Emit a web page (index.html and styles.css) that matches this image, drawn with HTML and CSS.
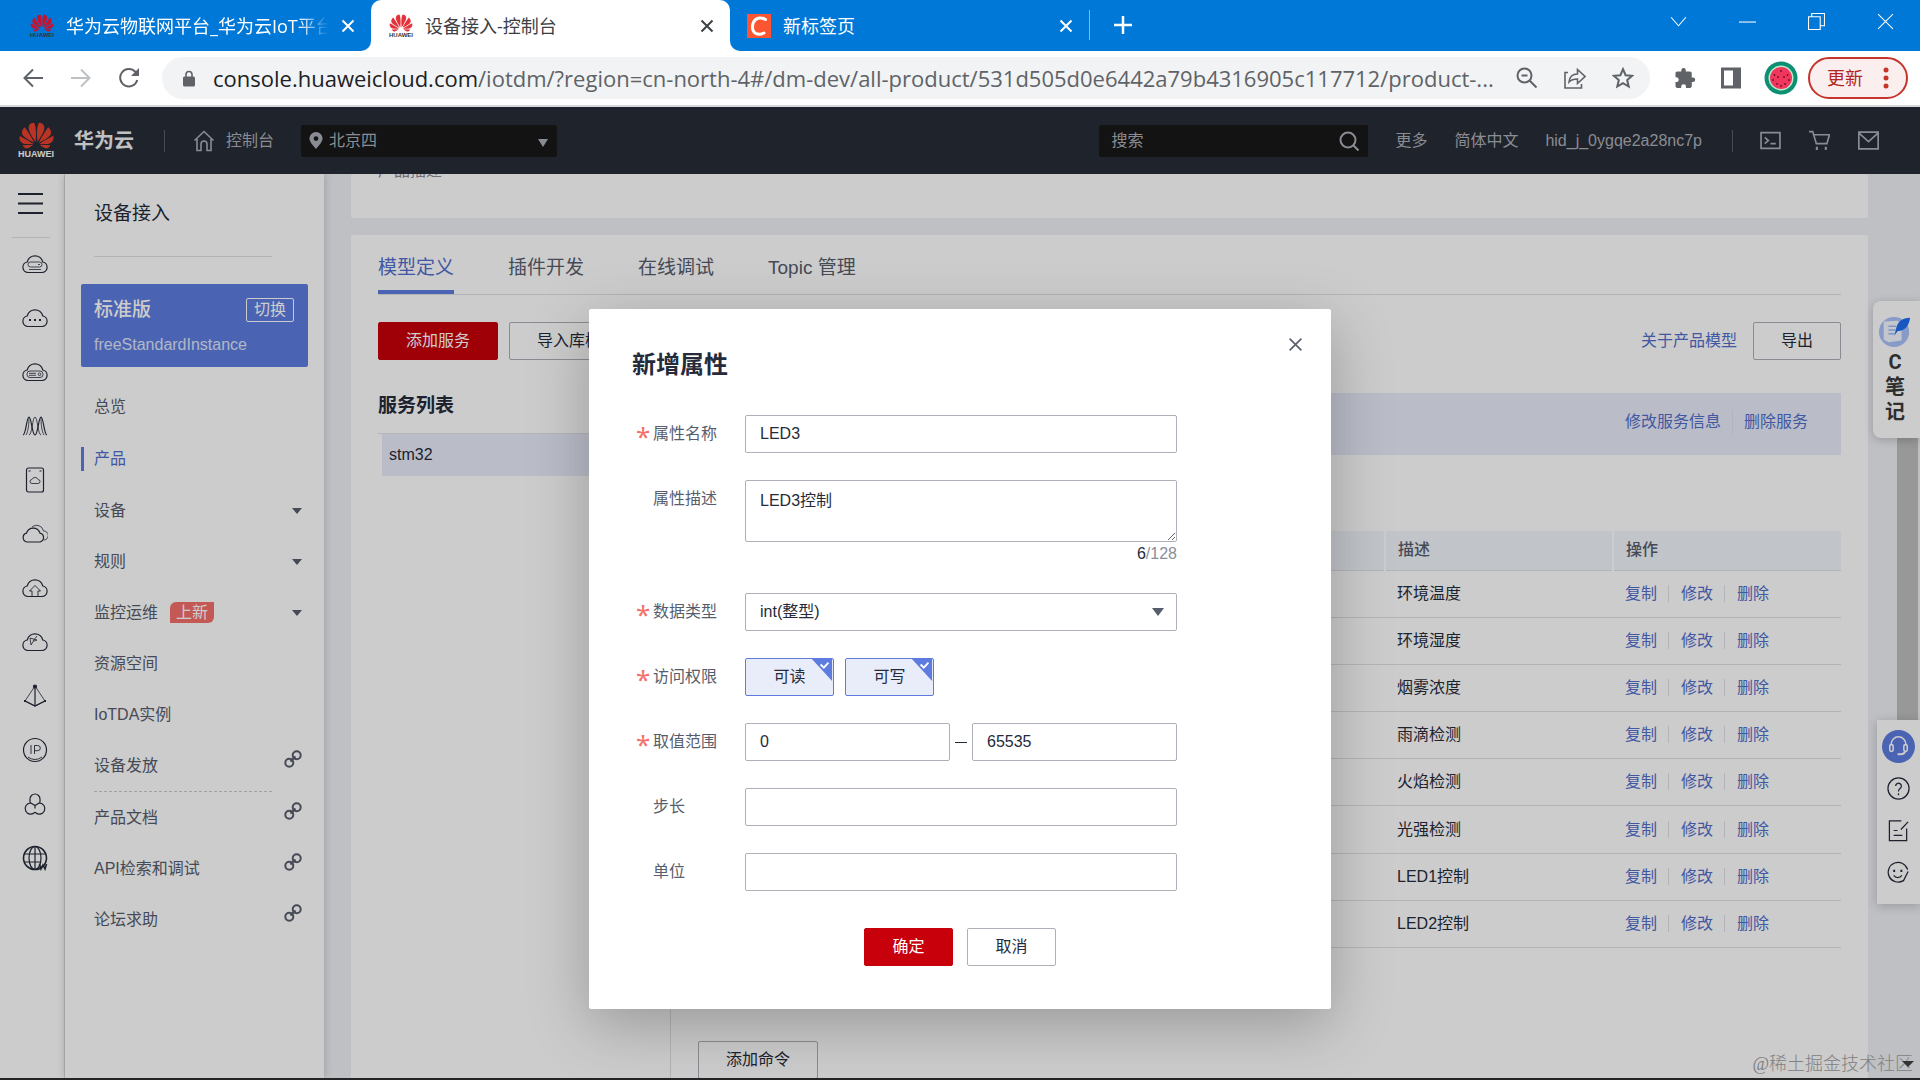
FILE: index.html
```html
<!DOCTYPE html>
<html lang="zh-CN">
<head>
    <meta charset="UTF-8">
    <meta name="viewport" content="width=device-width, initial-scale=1.0">
    <title>设备接入-控制台</title>
    <link rel="stylesheet" href="styles.css">
</head>
<body>
    <svg width="0" height="0" class="sprite" aria-hidden="true">
        <symbol id="petals" viewBox="0 2.5 24 19">
            <path d="M3.67 6.14S1.82 7.91 1.72 9.78v.35c.08 1.51 1.22 2.4 1.22 2.4 1.83 1.79 6.26 4.04 7.3 4.55 0 0 .06.03.1-.01l.02-.04v-.04C7.52 10.8 3.67 6.14 3.67 6.14zM9.65 18.6c-.02-.08-.1-.08-.1-.08l-7.38.26c.8 1.43 2.15 2.53 3.56 2.2.96-.25 3.16-1.78 3.88-2.3.06-.05.04-.09.04-.09zm.08-.78C6.49 15.63.21 12.28.21 12.28c-.15.46-.2.9-.21 1.3v.07c0 1.07.4 1.82.4 1.82.8 1.69 2.34 2.2 2.34 2.2.7.3 1.4.31 1.4.31.12.02 4.4 0 5.54 0 .05 0 .08-.05.08-.05v-.06c0-.03-.03-.05-.03-.05zM9.06 3.19a3.42 3.42 0 00-2.57 3.15v.41c.03.6.16 1.05.16 1.05.66 2.9 3.86 7.65 4.55 8.65.05.05.1.03.1.03a.1.1 0 00.06-.1c1.06-10.6-1.11-13.42-1.11-13.42-.32.02-1.19.23-1.19.23zm8.3 2.27s-.49-1.8-2.44-2.28c0 0-.57-.14-1.17-.22 0 0-2.18 2.81-1.12 13.43.01.07.06.08.06.08.07.03.1-.03.1-.03.72-1.03 3.9-5.76 4.55-8.64 0 0 .36-1.4.02-2.34zm-2.92 13.07s-.07 0-.09.05c0 0-.01.07.03.1.7.51 2.85 2 3.88 2.3 0 0 .16.05.43.06h.14c.69-.02 1.9-.37 3-2.26l-7.4-.25zm7.83-8.41c.14-2.06-1.94-3.97-1.94-3.98 0 0-3.85 4.66-6.67 10.8 0 0-.03.08.02.13l.04.01h.06c1.06-.53 5.46-2.77 7.28-4.54 0 0 1.15-.93 1.21-2.42zm1.52 2.14s-6.28 3.37-9.52 5.55c0 0-.05.04-.03.11 0 0 .03.06.07.06 1.16 0 5.56 0 5.67-.02 0 0 .57-.02 1.27-.29 0 0 1.56-.5 2.37-2.27 0 0 .73-1.45.17-3.14z"/>
        </symbol>
        <symbol id="cross" viewBox="0 0 14 14">
            <path d="M1.5 1.5l11 11M12.5 1.5l-11 11" fill="none" stroke="currentColor"/>
        </symbol>
        <symbol id="cloud" viewBox="0 0 26 20">
            <path d="M7 18.5H6A5.3 5.3 0 0 1 5.2 8a8 8 0 0 1 15.6 0A5.3 5.3 0 0 1 20 18.5z" fill="none" stroke="currentColor" stroke-width="1.2"/>
        </symbol>
        <symbol id="chain" viewBox="0 0 18 18">
            <g fill="none" stroke="currentColor" stroke-width="2">
                <circle cx="12.7" cy="5.300" r="4"/>
                <circle cx="5.300" cy="12.700" r="4"/>
                <path d="M6.500 11.500l5-5"/>
            </g>
        </symbol>
    </svg>

    <!-- browser chrome -->
    <div class="tab-bar">
        <div class="tab">
            <div class="favicon huawei dark"><svg><use href="#petals"/></svg><span>HUAWEI</span></div>
            <span class="tab-title fade">华为云物联网平台_华为云IoT平台</span>
            <button class="tab-close" aria-label="关闭"><svg><use href="#cross"/></svg></button>
        </div>
        <div class="tab active">
            <div class="favicon huawei"><svg><use href="#petals"/></svg><span>HUAWEI</span></div>
            <span class="tab-title">设备接入-控制台</span>
            <button class="tab-close" aria-label="关闭"><svg><use href="#cross"/></svg></button>
        </div>
        <div class="tab last">
            <div class="favicon"><svg viewBox="0 0 24 24"><rect width="24" height="24" fill="#fc5531"/><path d="M18.500 5.500C11 1.500 5.500 6 5.500 13c0 7 6 8.500 11.500 6" fill="none" stroke="#fff" stroke-width="3" stroke-linecap="round"/></svg></div>
            <span class="tab-title">新标签页</span>
            <button class="tab-close" aria-label="关闭"><svg><use href="#cross"/></svg></button>
        </div>
        <button class="new-tab" aria-label="新标签页"><svg viewBox="0 0 18 18"><path d="M9 0v18M0 9h18" stroke="#fff" stroke-width="2.500"/></svg></button>
        <div class="window-controls">
            <button aria-label="标签页列表"><svg viewBox="0 0 16 16"><path d="M1 4l7 8 7-8"/></svg></button>
            <button aria-label="最小化"><svg viewBox="0 0 16 16"><path d="M0 8.500h16"/></svg></button>
            <button aria-label="还原"><svg viewBox="0 0 16 16"><path d="M.5 3.500h11v12H.500zM3.500 3V.500h12v11.500H12"/></svg></button>
            <button aria-label="关闭窗口"><svg viewBox="0 0 16 16"><path d="M1 1l14 14M15 1L1 15"/></svg></button>
        </div>
    </div>
    <div class="toolbar">
        <div class="nav-buttons">
            <button aria-label="后退"><svg viewBox="0 0 20 20"><path d="M20 10H1.500M10 1.500L1.500 10l8.500 8.500"/></svg></button>
            <button aria-label="前进" class="muted"><svg viewBox="0 0 20 20"><path d="M0 10h18.500M10 1.500l8.500 8.500-8.500 8.500"/></svg></button>
            <button aria-label="重新加载"><svg viewBox="0 0 20 20"><path d="M18.300 12a8.700 8.700 0 1 1-2-8.200l2 2.400"/><path d="M20 0v8h-8z" fill="#5f6368" stroke="none"/></svg></button>
        </div>
        <div class="address">
            <svg class="lock" viewBox="0 0 12 16"><rect y="6" width="12" height="10" rx="1.500" fill="#5f6368"/><path d="M3 7V4a3 3 0 0 1 6 0v3" fill="none" stroke="#5f6368" stroke-width="1.600"/></svg>
            <span class="url"><b>console.huaweicloud.com</b>/iotdm/?region=cn-north-4#/dm-dev/all-product/531d505d0e6442a79b4316905c117712/product-...</span>
            <svg viewBox="0 0 22 22"><circle cx="8.500" cy="8.500" r="7"/><path d="M5.500 8.500h6M13.500 13.500l7 7"/></svg>
            <svg viewBox="0 0 22 22"><path d="M4 5.500H1v15.500h16.500v-4" stroke-width="1.600"/><path d="M5 15c.5-5 3.500-8 8.500-8V2.500l7.500 7-7.500 7V12c-4 0-6.500 1-8.500 3z" stroke-width="1.600"/></svg>
            <svg viewBox="0 0 22 22"><path d="M11 2.200l2.600 6 6.500.6-4.900 4.300 1.500 6.400-5.700-3.400-5.700 3.400 1.500-6.400-4.900-4.300 6.500-.6z"/></svg>
        </div>
        <svg class="ext" viewBox="0 0 22 22"><path d="M19 10.500h-1.300V6.300c0-1-.8-1.800-1.800-1.800h-4.100V3.200a2.200 2.200 0 0 0-4.500 0v1.300H3.200c-1 0-1.700.8-1.700 1.800v3.900h1.200a2.500 2.500 0 0 1 0 4.900H1.500v4c0 1 .8 1.900 1.800 1.900h3.900v-1.300a2.400 2.400 0 0 1 4.800 0V21h4c1 0 1.800-.9 1.800-1.900v-4.200H19a2.200 2.200 0 0 0 0-4.400z" fill="#5f6368"/></svg>
        <svg class="ext" viewBox="0 0 22 22"><path d="M2.500 2h17v18h-17z" fill="none" stroke="#5f6368" stroke-width="3"/><path d="M13 2h7v18h-7z" fill="#5f6368"/></svg>
        <svg class="avatar" viewBox="0 0 34 34"><circle cx="17" cy="17" r="16.500" fill="#0c9073"/><circle cx="17" cy="17" r="12.500" fill="#bfe8c8"/><circle cx="17" cy="17" r="11" fill="#f0365c"/><path d="M17 9v2M10.500 13v2M23.500 13v2M9 18v2M25 18v2M14 15v2M20 15v2M13 22v2M21 22v2M17 24v2" stroke="#5c1025" stroke-width="1.200"/></svg>
        <button class="update">更新<svg viewBox="0 0 6 22"><circle cx="3" cy="3" r="2.500"/><circle cx="3" cy="11" r="2.500"/><circle cx="3" cy="19" r="2.500"/></svg></button>
    </div>

    <div class="page">
        <header class="header">
            <div class="brand huawei"><svg><use href="#petals"/></svg><span>HUAWEI</span></div>
            <strong>华为云</strong>
            <i class="split"></i>
            <a href="#" class="home"><svg viewBox="0 0 22 22"><path d="M1.500 10.500L11 1.500l9.500 9M4 9v11.500h4V14a3 3 0 0 1 6 0v6.500h4V9"/></svg>控制台</a>
            <div class="region">
                <svg viewBox="0 0 14 18"><path d="M7 0a7 7 0 0 0-7 7c0 4 7 11 7 11s7-7 7-11a7 7 0 0 0-7-7zm0 4.500a2.500 2.500 0 1 1 0 5 2.500 2.500 0 0 1 0-5z" fill="#adb0b8"/></svg>
                <select aria-label="区域"><option>北京四</option></select>
            </div>
            <div class="search">
                <input type="text" placeholder="搜索" aria-label="搜索">
                <svg viewBox="0 0 20 20"><circle cx="9" cy="9" r="7.500"/><path d="M14 14l5.500 5.500"/></svg>
            </div>
            <a href="#">更多</a>
            <a href="#">简体中文</a>
            <a href="#">hid_j_0ygqe2a28nc7p</a>
            <i class="split"></i>
            <div class="header-icons">
                <svg viewBox="0 0 20 20"><path d="M1 2.500h18v15H1zM4.500 7l3.500 3-3.500 3M10 13h5"/></svg>
                <svg viewBox="0 0 20 20"><path d="M0 1.500h3.500L7 13h10l2.500-8.500H5"/><path d="M6.500 17.500h2M15 17.500h2" stroke-width="3"/></svg>
                <svg viewBox="0 0 20 20"><path d="M0.800 2h18.400v16H.800zM1 3l9 8 9-8"/></svg>
            </div>
        </header>

        <div class="content">
            <nav class="rail">
                <button aria-label="服务列表"><svg viewBox="0 0 25 21"><path d="M0 1h25M0 10.500h25M0 20h25" stroke-width="2.200"/></svg></button>
                <svg viewBox="0 0 26 26"><use href="#cloud" y="3" width="26" height="20"/><rect x="6" y="11" width="14" height="5" rx="2.500" stroke-width=".8"/><path d="M16 13.500h2M7 18.500h12" stroke-width=".8"/></svg>
                <svg viewBox="0 0 26 26"><use href="#cloud" y="3" width="26" height="20"/><path d="M7 15h2M12 15h2M17 15h2" stroke-width="2"/></svg>
                <svg viewBox="0 0 26 26"><use href="#cloud" y="3" width="26" height="20"/><rect x="5" y="12" width="16" height="6.500" rx="3" stroke-width=".8"/><path d="M7 14.300h7M7 16.300h7" stroke-width=".8"/><circle cx="17.500" cy="15.300" r="1.300" stroke-width=".8"/></svg>
                <svg viewBox="0 0 26 26"><path d="M1 22c3 0 3.500-18 6-18s3 18 6 18 3.500-18 6-18 3 18 6 18"/><path d="M7 22c3 0 3.500-18 6-18s3 18 6 18M4 22C6.500 18 7 10 7 4M22 22c-2.500-4-3-12-3-18" stroke-width=".8"/></svg>
                <svg viewBox="0 0 26 26"><rect x="4.500" y="1" width="17" height="24" rx="2"/><path d="M6.500 4h2M17.500 4h2"/><path d="M10 16.500a2 2 0 0 1 0-4 3.200 3.200 0 0 1 6 0 2 2 0 0 1 0 4z" stroke-width=".8"/></svg>
                <svg viewBox="0 0 26 26"><path d="M6 21H5a4.500 4.500 0 0 1-.5-8.800 7 7 0 0 1 13.500 0A4.500 4.500 0 0 1 18 21z"/><path d="M10 6a7 7 0 0 1 11.500 4A4.500 4.500 0 0 1 22 19" stroke-width=".8"/></svg>
                <svg viewBox="0 0 26 26"><use href="#cloud" y="3" width="26" height="20"/><path d="M10 21v-5H7.500L13 10.500l5.500 5.500H16v5" stroke-width=".9"/></svg>
                <svg viewBox="0 0 26 26"><use href="#cloud" y="3" width="26" height="20"/><path d="M8 9l7 2-4 1.500L9 16zM15 7l-4 5" stroke-width=".8"/></svg>
                <svg viewBox="0 0 26 26"><path d="M13 3v20" /><path d="M13 3L3 18l10 5 10-5z" stroke-width=".8"/><path d="M3 18l10 5 10-5"/><circle cx="13" cy="3.500" r="1.500" fill="#252b3a"/><path d="M2 18h2M22 18h2" stroke-width="2"/></svg>
                <svg viewBox="0 0 26 26"><circle cx="13" cy="13" r="11.500"/><path d="M9 8v9M12.500 17V8.500h3.200a2.600 2.600 0 0 1 0 5.200h-3.200M6 20a11 11 0 0 0 14 0" stroke-width=".9"/></svg>
                <svg viewBox="0 0 26 26"><path d="M8 11.500V8a5 5 0 0 1 10 0v3.500M13 17.500V14.500M8 11.500l5 3 5-3M8.500 12A5.600 5.600 0 1 0 13 21.200M17.500 12A5.600 5.600 0 1 1 13 21.200"/></svg>
                <svg viewBox="0 0 26 26"><circle cx="13" cy="13" r="11.500" stroke-width="1.600"/><ellipse cx="13" cy="13" rx="6" ry="11.500"/><path d="M13 1.500v23M2 9h22M2 17h16"/><path d="M17.500 19l1.500 5 2-4 2 4 1.500-5" stroke-width="1.600"/></svg>
            </nav>

            <aside class="sidebar">
                <h2>设备接入</h2>
                <div class="instance">
                    <div><b>标准版</b><button>切换</button></div>
                    <p>freeStandardInstance</p>
                </div>
                <ul>
                    <li><a href="#">总览</a></li>
                    <li class="current"><a href="#">产品</a></li>
                    <li><a href="#">设备</a><i class="caret"></i></li>
                    <li><a href="#">规则</a><i class="caret"></i></li>
                    <li><a href="#">监控运维</a><em>上新</em><i class="caret"></i></li>
                    <li><a href="#">资源空间</a></li>
                    <li><a href="#">IoTDA实例</a></li>
                    <li class="out"><a href="#">设备发放</a><svg><use href="#chain"/></svg></li>
                </ul>
                <ul class="docs">
                    <li class="out"><a href="#">产品文档</a><svg><use href="#chain"/></svg></li>
                    <li class="out"><a href="#">API检索和调试</a><svg><use href="#chain"/></svg></li>
                    <li class="out"><a href="#">论坛求助</a><svg><use href="#chain"/></svg></li>
                </ul>
            </aside>

            <main class="main">
                <section class="card summary"><p>产品描述</p></section>
                <section class="card detail">
                    <nav class="tabs">
                        <a href="#" class="selected">模型定义</a>
                        <a href="#">插件开发</a>
                        <a href="#">在线调试</a>
                        <a href="#">Topic 管理</a>
                    </nav>
                    <div class="actions">
                        <button class="btn primary">添加服务</button>
                        <button class="btn">导入库模型</button>
                        <a href="#">关于产品模型</a>
                        <button class="btn">导出</button>
                    </div>
                    <div class="model">
                        <div class="services">
                            <h3>服务列表</h3>
                            <div class="service">stm32</div>
                        </div>
                        <div class="service-detail">
                            <div class="service-bar">
                                <a href="#">修改服务信息</a>
                                <a href="#">删除服务</a>
                            </div>
                            <table>
                                <thead>
                                    <tr><th></th><th>描述</th><th>操作</th></tr>
                                </thead>
                                <tbody>
                                    <tr><td></td><td>环境温度</td><td><a href="#">复制</a><a href="#">修改</a><a href="#">删除</a></td></tr>
                                    <tr><td></td><td>环境湿度</td><td><a href="#">复制</a><a href="#">修改</a><a href="#">删除</a></td></tr>
                                    <tr><td></td><td>烟雾浓度</td><td><a href="#">复制</a><a href="#">修改</a><a href="#">删除</a></td></tr>
                                    <tr><td></td><td>雨滴检测</td><td><a href="#">复制</a><a href="#">修改</a><a href="#">删除</a></td></tr>
                                    <tr><td></td><td>火焰检测</td><td><a href="#">复制</a><a href="#">修改</a><a href="#">删除</a></td></tr>
                                    <tr><td></td><td>光强检测</td><td><a href="#">复制</a><a href="#">修改</a><a href="#">删除</a></td></tr>
                                    <tr><td></td><td>LED1控制</td><td><a href="#">复制</a><a href="#">修改</a><a href="#">删除</a></td></tr>
                                    <tr><td></td><td>LED2控制</td><td><a href="#">复制</a><a href="#">修改</a><a href="#">删除</a></td></tr>
                                </tbody>
                            </table>
                            <button class="btn">添加命令</button>
                        </div>
                    </div>
                </section>
            </main>
        </div>

        <div class="scrollbar"></div>
        <div class="notes">
            <svg viewBox="0 0 34 34"><circle cx="16" cy="18" r="16" fill="#a9c1fb"/><path d="M5 7l15-1 4 4v17l-14 2-5-3z" fill="#f4f8ff"/><path d="M10 12h8M10 16h8M10 20h6" stroke="#9db8f5" stroke-width="1.500"/><path d="M33 3c-8 0-14 4-15 13l-2 6 4-5c8 0 12-6 13-14z" fill="#1c6df2"/></svg>
            <span>C</span><span>笔</span><span>记</span>
        </div>
        <div class="helpers">
            <svg class="service-icon" viewBox="0 0 34 34"><circle cx="17" cy="17" r="17" fill="#5e7ce0"/><g fill="none" stroke="#fff" stroke-width="1.600"><path d="M9.500 16v-1.500a7.500 7.500 0 0 1 15 0V16"/><rect x="8" y="15" width="3.500" height="7" rx="1.700"/><rect x="22.500" y="15" width="3.500" height="7" rx="1.700"/><path d="M24 22c-1 2.500-3 3-5 3h-3" stroke-width="2"/></g></svg>
            <svg viewBox="0 0 24 24"><circle cx="12" cy="12" r="11"/><path d="M9 9.500a3 3 0 1 1 4.500 2.600c-1 .7-1.500 1.200-1.500 2.900M12 17v2"/></svg>
            <svg viewBox="0 0 24 24"><path d="M15 2H2.500v20.500h18V10M22 3l-7.500 8M7 12h4M7 17h9"/></svg>
            <svg viewBox="0 0 24 24"><path d="M17 20.500A10.300 10.300 0 1 1 21.500 9M22 11l-5 10M7 15c2 3 6.500 3 8.500 0"/><path d="M7.500 9v2.500M15 9v2.500" stroke-width="2"/></svg>
        </div>

        <div class="overlay">
            <form class="modal">
                <button type="button" class="modal-close" aria-label="关闭"><svg><use href="#cross"/></svg></button>
                <h1>新增属性</h1>
                <div class="field required">
                    <label for="name">属性名称</label>
                    <input type="text" id="name" value="LED3">
                </div>
                <div class="field">
                    <label for="desc">属性描述</label>
                    <div class="area">
                        <textarea id="desc">LED3控制</textarea>
                        <p><span>6</span>/128</p>
                    </div>
                </div>
                <div class="field required">
                    <label for="type">数据类型</label>
                    <div class="select">
                        <select id="type"><option>int(整型)</option></select>
                    </div>
                </div>
                <div class="field required">
                    <span class="label">访问权限</span>
                    <div class="checks">
                        <label><input type="checkbox" checked>可读<svg viewBox="0 0 22 24"><path d="M0 0h22v24z" fill="#5e7ce0"/><path d="M9.500 6l3.500 3.500L18 4" fill="none" stroke="#fff" stroke-width="2"/></svg></label>
                        <label><input type="checkbox" checked>可写<svg viewBox="0 0 22 24"><path d="M0 0h22v24z" fill="#5e7ce0"/><path d="M9.500 6l3.500 3.500L18 4" fill="none" stroke="#fff" stroke-width="2"/></svg></label>
                    </div>
                </div>
                <div class="field required">
                    <label for="min">取值范围</label>
                    <div class="range">
                        <input type="text" id="min" value="0">
                        <i></i>
                        <input type="text" value="65535" aria-label="最大值">
                    </div>
                </div>
                <div class="field">
                    <label for="step">步长</label>
                    <input type="text" id="step">
                </div>
                <div class="field">
                    <label for="unit">单位</label>
                    <input type="text" id="unit">
                </div>
                <div class="modal-actions">
                    <button type="button" class="btn primary">确定</button>
                    <button type="button" class="btn">取消</button>
                </div>
            </form>
        </div>
        <div class="watermark">@稀土掘金技术社区<i class="caret"></i></div>
    </div>
    <div class="taskbar"></div>
</body>
</html>
```
FILE: styles.css
```css
* {
    box-sizing: border-box;
}

body {
    margin: 0;
    height: 100vh;
    display: flex;
    flex-direction: column;
    overflow: hidden;
    font-family: "Liberation Sans", "Noto Sans CJK SC", sans-serif;
    font-size: 16px;
    line-height: 24px;
    color: #252b3a;
}

h1, h2, h3, p, ul {
    margin: 0;
    padding: 0;
}

ul {
    list-style: none;
}

a {
    color: #526ecc;
    text-decoration: none;
}

button, input, select, textarea {
    font: inherit;
    color: inherit;
}

button {
    border: none;
    background: none;
    padding: 0;
    cursor: pointer;
}

svg {
    flex: none;
}

.sprite {
    position: absolute;
}

/* tabs */
.tab-bar {
    height: 51px;
    flex: none;
    display: flex;
    background: #0078d7;
    color: #fff;
    font-family: "Open Sans", "Noto Sans CJK SC", sans-serif;
    font-size: 18px;
}

.tab {
    width: 359px;
    display: flex;
    align-items: center;
    gap: 12px;
    padding: 0 16px 0 18px;
}

.tab:first-child, .tab.last {
    position: relative;
    z-index: 1;
    background: #0078d7;
}

.tab:first-child {
    width: 371px;
    padding-left: 30px;
    border-radius: 0 0 10px 0;
}

.tab.last {
    padding-left: 17px;
    border-radius: 0 0 0 10px;
}

.tab.active {
    background: #fff;
    color: #3c4043;
    border-radius: 10px 10px 0 0;
    box-shadow: 0 20px 0 10px #fff;
    clip-path: inset(0 -10px 0 -10px);
}

.favicon {
    width: 24px;
    height: 24px;
    flex: none;
}

.favicon svg {
    display: block;
    width: 24px;
    height: 24px;
}

.huawei {
    display: flex;
    flex-direction: column;
    align-items: center;
}

.huawei svg {
    fill: #e2323b;
}

.favicon.huawei svg {
    height: 18px;
}

.favicon.huawei span {
    font: bold 6px/6px "Liberation Sans", sans-serif;
    color: #333;
}

.favicon.dark svg {
    fill: #c4122f;
}

.tab-title {
    flex: 1;
    line-height: 28px;
    white-space: nowrap;
    overflow: hidden;
}

.fade {
    -webkit-mask-image: linear-gradient(90deg, #000 88%, transparent);
    mask-image: linear-gradient(90deg, #000 88%, transparent);
}

.tab-close {
    width: 14px;
    height: 14px;
}

.tab-close svg {
    display: block;
    width: 14px;
    height: 14px;
    stroke-width: 2;
}

.new-tab {
    height: 30px;
    margin: 10px 0;
    padding: 0 24px;
    border-left: 1px solid #7fbbeb;
}

.new-tab svg {
    display: block;
    width: 18px;
    height: 18px;
}

.window-controls {
    margin-left: auto;
    padding: 13px 26px 0 0;
    display: flex;
    align-items: flex-start;
    gap: 52px;
}

.window-controls svg {
    display: block;
    width: 17px;
    height: 17px;
    fill: none;
    stroke: #fff;
}

/* address bar */
.toolbar {
    height: 56px;
    flex: none;
    display: flex;
    align-items: center;
    padding: 0 12px 0 23px;
    border-bottom: 2px solid #d5d7da;
    background: #fff;
    font-family: "Open Sans", "Noto Sans CJK SC", sans-serif;
}

.nav-buttons {
    display: flex;
    gap: 28px;
    width: 139px;
}

.nav-buttons svg {
    display: block;
    width: 20px;
    height: 20px;
    fill: none;
    stroke: #5f6368;
    stroke-width: 2;
}

.nav-buttons .muted svg {
    stroke: #bdc1c6;
}

.address {
    flex: 1;
    min-width: 0;
    height: 42px;
    display: flex;
    align-items: center;
    gap: 26px;
    padding: 0 16px 0 21px;
    border-radius: 21px;
    background: #f1f3f4;
}

.address svg {
    width: 22px;
    height: 22px;
    fill: none;
    stroke: #5f6368;
    stroke-width: 2;
}

.address .lock {
    width: 12px;
    height: 17px;
    stroke: none;
}

.url {
    flex: 1;
    margin: 0 -8px;
    font-size: 22px;
    line-height: 32px;
    white-space: nowrap;
    overflow: hidden;
    color: #5f6368;
}

.url b {
    font-weight: 400;
    color: #202124;
}

.ext {
    width: 22px;
    height: 22px;
    margin-left: 24px;
}

.avatar {
    width: 34px;
    height: 34px;
    margin: 0 10px 0 22px;
}

.update {
    display: flex;
    align-items: center;
    justify-content: space-between;
    width: 100px;
    height: 42px;
    padding: 0 17px;
    border: 2px solid #c5352c;
    border-radius: 21px;
    background: #fbeeee;
    color: #b3261e;
    font-size: 18px;
}

.update svg {
    width: 6px;
    height: 22px;
    fill: #c5352c;
}

/* console */
.page {
    position: relative;
    flex: 1;
    min-height: 0;
    display: flex;
    flex-direction: column;
}

.header {
    height: 67px;
    flex: none;
    display: flex;
    align-items: center;
    padding: 0 41px 0 18px;
    background: #272c36;
    color: #adb0b8;
}

.header svg {
    fill: none;
    stroke: #adb0b8;
    stroke-width: 1.6;
}

.header a {
    color: #adb0b8;
    margin-left: 27px;
}

.brand {
    width: 36px;
}

.header .brand svg {
    width: 35px;
    height: 27px;
    fill: #e8412f;
    stroke: none;
}

.brand span {
    font-size: 9px;
    line-height: 11px;
    font-weight: bold;
    color: #fff;
}

.header strong {
    margin-left: 20px;
    font-size: 20px;
    color: #f0f0f2;
}

.split {
    width: 1px;
    height: 22px;
    margin-left: 30px;
    background: #575d6c;
}

.header .home {
    display: flex;
    align-items: center;
    gap: 11px;
    margin-left: 28px;
}

.home svg {
    width: 22px;
    height: 22px;
}

.region {
    position: relative;
    width: 256px;
    height: 32px;
    margin-left: 27px;
    border-radius: 2px;
    background: #181818;
}

.region svg {
    position: absolute;
    left: 8px;
    top: 7px;
    width: 14px;
    height: 17px;
    stroke: none;
}

.region select {
    width: 100%;
    height: 32px;
    padding: 0 28px;
    border: none;
    background: none;
    appearance: none;
}

.region::after, .select::after {
    content: "";
    position: absolute;
    right: 9px;
    top: 14px;
    border: 5px solid transparent;
    border-top: 8px solid #adb0b8;
    border-bottom: none;
}

.search {
    display: flex;
    align-items: center;
    width: 269px;
    height: 32px;
    margin-left: auto;
    padding-right: 9px;
    border-radius: 2px;
    background: #181818;
}

.search input {
    flex: 1;
    min-width: 0;
    padding: 0 12px;
    border: none;
    background: none;
}

.search input::placeholder {
    color: #adb0b8;
}

.search svg {
    width: 20px;
    height: 20px;
    stroke-width: 2;
}

.header-icons {
    display: flex;
    gap: 28px;
    margin-left: 27px;
}

.header-icons svg {
    width: 21px;
    height: 21px;
}

.content {
    flex: 1;
    min-height: 0;
    display: flex;
    background: #eef0f5;
    overflow: hidden;
}

.rail {
    width: 65px;
    flex: none;
    display: flex;
    flex-direction: column;
    align-items: center;
    gap: 28px;
    padding-left: 6px;
    border-right: 1px solid #dfe1e6;
    background: #fff;
}

.rail button {
    width: 38px;
    height: 64px;
    margin: 0 8px -15px 0;
    padding: 19px 6px 23px;
    border-bottom: 1px solid #dfe1e6;
}

.rail svg {
    display: block;
    width: 26px;
    height: 26px;
    fill: none;
    stroke: #252b3a;
    color: #252b3a;
    stroke-width: 1.2;
}

.rail button svg {
    width: 25px;
    height: 21px;
}

.sidebar {
    z-index: 1;
    width: 259px;
    flex: none;
    padding: 0 16px;
    background: #fff;
    box-shadow: 0 0 8px rgba(0, 0, 0, 0.2);
}

.sidebar h2 {
    width: 178px;
    height: 83px;
    margin: 0 0 27px 13px;
    padding-top: 28px;
    border-bottom: 1px solid #dfe1e6;
    font-size: 19px;
    font-weight: 400;
}

.instance {
    height: 83px;
    padding: 14px 14px 0 13px;
    border-radius: 2px;
    background: #5e7ce0;
    color: #fff;
}

.instance div {
    display: flex;
    align-items: center;
    justify-content: space-between;
}

.instance b {
    font-size: 19px;
    font-weight: 500;
}

.instance button {
    padding: 0 7px;
    border: 1px solid #fff;
    border-radius: 2px;
    line-height: 22px;
}

.instance p {
    margin-top: 11px;
    color: #dfe5f9;
}

.sidebar ul {
    padding-top: 14px;
}

.sidebar li {
    height: 51px;
    display: flex;
    align-items: center;
    padding: 0 6px 0 13px;
}

.sidebar li a {
    color: #575d6c;
}

.sidebar .current {
    height: 24px;
    margin: 15px 0 14px;
    padding-left: 10px;
    border-left: 3px solid #5e7ce0;
}

.sidebar .current a {
    color: #526ecc;
}

.sidebar em {
    margin-left: 12px;
    padding: 0 6px;
    border-radius: 6px 0;
    background: #f66f6a;
    color: #fff;
    font-style: normal;
    line-height: 21px;
}

.caret {
    margin-left: auto;
    border: 5px solid transparent;
    border-top: 6px solid #575d6c;
    border-bottom: none;
}

.sidebar li svg {
    width: 18px;
    height: 18px;
    margin: 0 0 14px auto;
    color: #575d6c;
}

.sidebar .docs {
    padding-top: 0;
}

.docs::before {
    content: "";
    display: block;
    width: 178px;
    margin-left: 13px;
    border-top: 1px dashed #c8cbd2;
}

.main {
    flex: 1;
    min-width: 0;
    padding: 0 52px 0 27px;
}

.card {
    background: #fff;
    border-radius: 2px;
}

/* scrolled, only the end of this card is in view */
.summary {
    display: flex;
    align-items: flex-start;
    height: 44px;
    margin-bottom: 17px;
    padding: 0 27px;
    color: #8a8e99;
}

.summary p {
    margin-top: -15px;
}

.detail {
    padding: 0 27px;
}

.tabs {
    display: flex;
    gap: 54px;
    border-bottom: 1px solid #dfe1e6;
    font-size: 19px;
}

.tabs a {
    height: 59px;
    padding-top: 21px;
    color: #575d6c;
}

.tabs .selected {
    color: #526ecc;
    border-bottom: 4px solid #5e7ce0;
}

.actions {
    display: flex;
    align-items: center;
    gap: 11px;
    padding-top: 27px;
}

.actions a {
    margin: 0 5px 0 auto;
}

.btn {
    height: 38px;
    padding: 0 27px;
    border: 1px solid #adb0b8;
    border-radius: 2px;
    background: #fff;
    color: #252b3a;
}

.btn.primary {
    border-color: #c7000b;
    background: #c7000b;
    color: #fff;
}

.model {
    display: flex;
    height: 800px;
    padding-top: 33px;
}

.services {
    width: 293px;
    border-right: 1px solid #dfe1e6;
}

.services h3 {
    height: 41px;
    border-bottom: 1px solid #dfe1e6;
    font-size: 19px;
    line-height: 26px;
}

.service {
    margin-left: 4px;
    padding: 9px 7px;
    background: #e9edfa;
}

.service-detail {
    flex: 1;
    padding-left: 27px;
}

.service-bar {
    display: flex;
    align-items: center;
    justify-content: flex-end;
    height: 62px;
    margin-bottom: 76px;
    padding: 0 33px 4px;
    background: #e9edfa;
}

.service-bar a + a {
    margin-left: 11px;
    padding-left: 11px;
    border-left: 1px solid #dfe1e6;
}

table {
    width: 100%;
    height: 417px;
    margin-bottom: 93px;
    border-collapse: collapse;
    table-layout: fixed;
}

th, td {
    padding: 0 12px;
    border-bottom: 1px solid #dfe1e6;
    text-align: left;
}

th {
    height: 39px;
    background: #f2f5fc;
    color: #575d6c;
    font-weight: 500;
}

th + th {
    width: 228px;
    border-left: 2px solid #fff;
}

td a + a {
    margin-left: 11px;
    padding-left: 12px;
    border-left: 1px solid #dfe1e6;
}

/* floating widgets on the right edge */
.scrollbar {
    position: absolute;
    right: 2px;
    top: 280px;
    width: 21px;
    height: 333px;
    background: #bebebe;
}

.notes, .helpers {
    position: absolute;
    right: 0;
    display: flex;
    flex-direction: column;
    align-items: center;
    background: #fff;
    box-shadow: 0 2px 10px rgba(0, 0, 0, 0.2);
}

.notes {
    top: 194px;
    width: 47px;
    height: 137px;
    padding: 14px 3px 0 0;
    border-radius: 8px 0 0 8px;
    font: bold 20px/25px Roboto, "Noto Sans CJK SC", sans-serif;
    color: #3a3a3a;
}

.notes svg {
    width: 34px;
    height: 32px;
    margin-bottom: 3px;
}

.helpers {
    top: 613px;
    width: 43px;
    height: 184px;
    gap: 19px;
    padding-top: 10px;
}

.helpers svg {
    width: 23px;
    height: 23px;
    fill: none;
    stroke: #252b3a;
    stroke-width: 1.3;
}

.helpers .service-icon {
    width: 33px;
    height: 33px;
    margin-bottom: -5px;
    stroke: none;
}

/* dialog */
.overlay {
    position: absolute;
    z-index: 2;
    inset: 0;
    display: flex;
    align-items: flex-start;
    justify-content: center;
    padding-top: 202px;
    background: rgba(0, 0, 0, 0.2);
}

.modal {
    position: relative;
    width: 742px;
    padding: 40px 43px 43px;
    border-radius: 2px;
    background: #fff;
    box-shadow: 0 16px 60px rgba(0, 0, 0, 0.25);
}

.modal h1 {
    margin-bottom: 34px;
    font-size: 24px;
    line-height: 32px;
}

.modal-close {
    position: absolute;
    right: 28px;
    top: 28px;
}

.modal-close svg {
    display: block;
    width: 15px;
    height: 15px;
    color: #575d6c;
    stroke-width: 1.5;
}

.field {
    display: flex;
    width: 545px;
    margin-bottom: 27px;
}

.field > label, .label {
    position: relative;
    width: 113px;
    flex: none;
    padding-left: 21px;
    line-height: 37px;
    color: #575d6c;
}

.required > label::before, .required .label::before {
    content: "*";
    position: absolute;
    left: 4px;
    top: 3px;
    font: 26px/36px "Noto Sans", sans-serif;
    color: #f66f6a;
}

.field > input, .area, .select, .checks, .range {
    flex: 1;
    min-width: 0;
}

.field input[type="text"], .field textarea, .field select {
    display: block;
    width: 100%;
    height: 38px;
    padding: 0 14px;
    border: 1px solid #adb0b8;
    border-radius: 2px;
    background: #fff;
    color: #252b3a;
}

.field > input[type="text"] {
    width: auto;
}

.field textarea {
    height: 62px;
    padding: 8px 14px;
    resize: vertical;
}

.area p {
    text-align: right;
    color: #8a8e99;
}

.area span {
    color: #252b3a;
}

.select {
    position: relative;
}

.field select {
    appearance: none;
}

.select::after {
    right: 13px;
    top: 15px;
    border-width: 8px 6px 0;
    border-top-color: #575d6c;
}

.checks {
    display: flex;
    gap: 11px;
}

.checks label {
    position: relative;
    width: 89px;
    line-height: 36px;
    border: 1px solid #5e7ce0;
    border-radius: 2px;
    background: #e9edfa;
    text-align: center;
}

.checks input {
    position: absolute;
    opacity: 0;
}

.checks svg {
    position: absolute;
    top: 0;
    right: 0;
    width: 22px;
    height: 22px;
}

.range {
    display: flex;
    align-items: center;
    gap: 5px;
}

.range i {
    width: 12px;
    flex: none;
    border-top: 1px solid #252b3a;
}

.modal-actions {
    display: flex;
    justify-content: center;
    gap: 14px;
    padding-top: 10px;
}

.modal-actions .btn {
    width: 89px;
}

.watermark {
    position: absolute;
    z-index: 3;
    right: 6px;
    bottom: 2px;
    display: flex;
    align-items: center;
    font: 300 18px/24px "Liberation Serif", "Noto Sans CJK SC", serif;
    color: #808080;
}

.watermark .caret {
    margin-left: -11px;
    border-width: 6px 6px 0;
    border-top-color: #333;
}

.taskbar {
    height: 2px;
    flex: none;
    background: #242326;
}
```
